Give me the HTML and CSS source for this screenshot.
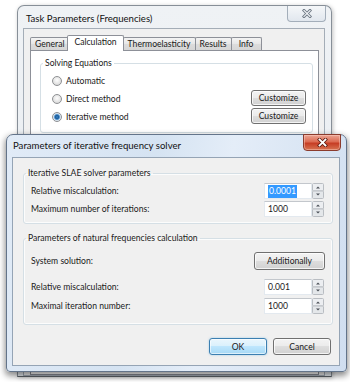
FILE: index.html
```html
<!DOCTYPE html>
<html>
<head>
<meta charset="utf-8">
<title>Task Parameters</title>
<link rel="stylesheet" href="styles.css">
</head>
<body>
<div class="desk">
  <div class="win back">
    <div class="titlebar">
      <span class="title">Task Parameters (Frequencies)</span>
      <span class="close">
        <svg width="10" height="9" viewBox="0 0 10 9"><path d="M2 1.5 L8 7.5 M8 1.5 L2 7.5" stroke="#6c7682" stroke-width="3" stroke-linecap="square"/><path d="M2 1.5 L8 7.5 M8 1.5 L2 7.5" stroke="#eef1f4" stroke-width="1.2" stroke-linecap="square"/></svg>
      </span>
    </div>
    <div class="client back-client">
      <div class="tabs">
        <div class="tab">General</div>
        <div class="tab sel">Calculation</div>
        <div class="tab">Thermoelasticity</div>
        <div class="tab">Results</div>
        <div class="tab">Info</div>
      </div>
      <div class="panel">
        <fieldset class="group solve">
          <legend>Solving Equations</legend>
          <div class="row">
            <span class="opt"><span class="radio"></span>Automatic</span>
          </div>
          <div class="row">
            <span class="opt"><span class="radio"></span>Direct method</span>
            <button class="btn customize">Customize</button>
          </div>
          <div class="row">
            <span class="opt"><span class="radio on"></span>Iterative method</span>
            <button class="btn customize">Customize</button>
          </div>
        </fieldset>
      </div>
    </div>
  </div>

  <div class="win front">
    <div class="titlebar">
      <span class="title">Parameters of iterative frequency solver</span>
      <span class="close">
        <svg width="11" height="9" viewBox="0 0 11 9"><path d="M2.5 1.5 L8.5 7.5 M8.5 1.5 L2.5 7.5" stroke="#5a1a10" stroke-width="3.4" stroke-linecap="square"/><path d="M2.5 1.5 L8.5 7.5 M8.5 1.5 L2.5 7.5" stroke="#ffffff" stroke-width="1.8" stroke-linecap="square"/></svg>
      </span>
    </div>
    <div class="client front-client">
      <fieldset class="group g1">
        <legend>Iterative SLAE solver parameters</legend>
        <div class="row">
          <span>Relative miscalculation:</span>
          <span class="spinbox"><span class="edit"><span class="selected">0.0001</span></span><svg class="spin" width="12" height="16" viewBox="0 0 12 16"><rect x="0.5" y="0.5" width="11" height="7.5" rx="1" fill="#eceef1" stroke="#b9bdc2"/><rect x="0.5" y="8" width="11" height="7.5" rx="1" fill="#e4e7ea" stroke="#b9bdc2"/><path d="M4 5.5 L6 3.5 L8 5.5Z" fill="#4a4f56"/><path d="M4 10.5 L6 12.5 L8 10.5Z" fill="#4a4f56"/></svg></span>
        </div>
        <div class="row">
          <span>Maximum number of iterations:</span>
          <span class="spinbox"><span class="edit">1000</span><svg class="spin" width="12" height="16" viewBox="0 0 12 16"><rect x="0.5" y="0.5" width="11" height="7.5" rx="1" fill="#eceef1" stroke="#b9bdc2"/><rect x="0.5" y="8" width="11" height="7.5" rx="1" fill="#e4e7ea" stroke="#b9bdc2"/><path d="M4 5.5 L6 3.5 L8 5.5Z" fill="#4a4f56"/><path d="M4 10.5 L6 12.5 L8 10.5Z" fill="#4a4f56"/></svg></span>
        </div>
      </fieldset>
      <fieldset class="group g2">
        <legend>Parameters of natural frequencies calculation</legend>
        <div class="row tall">
          <span>System solution:</span>
          <button class="btn additionally">Additionally</button>
        </div>
        <div class="row wide first">
          <span>Relative miscalculation:</span>
          <span class="spinbox"><span class="edit">0.001</span><svg class="spin" width="12" height="16" viewBox="0 0 12 16"><rect x="0.5" y="0.5" width="11" height="7.5" rx="1" fill="#eceef1" stroke="#b9bdc2"/><rect x="0.5" y="8" width="11" height="7.5" rx="1" fill="#e4e7ea" stroke="#b9bdc2"/><path d="M4 5.5 L6 3.5 L8 5.5Z" fill="#4a4f56"/><path d="M4 10.5 L6 12.5 L8 10.5Z" fill="#4a4f56"/></svg></span>
        </div>
        <div class="row wide">
          <span>Maximal iteration number:</span>
          <span class="spinbox"><span class="edit">1000</span><svg class="spin" width="12" height="16" viewBox="0 0 12 16"><rect x="0.5" y="0.5" width="11" height="7.5" rx="1" fill="#eceef1" stroke="#b9bdc2"/><rect x="0.5" y="8" width="11" height="7.5" rx="1" fill="#e4e7ea" stroke="#b9bdc2"/><path d="M4 5.5 L6 3.5 L8 5.5Z" fill="#4a4f56"/><path d="M4 10.5 L6 12.5 L8 10.5Z" fill="#4a4f56"/></svg></span>
        </div>
      </fieldset>
      <div class="actions">
        <button class="btn dlg default">OK</button>
        <button class="btn dlg">Cancel</button>
      </div>
    </div>
  </div>
</div>
</body>
</html>
```

FILE: styles.css
```css
* { box-sizing: border-box; }
html, body { margin: 0; padding: 0; }
body {
  width: 350px;
  height: 382px;
  overflow: hidden;
  background: #ffffff;
  font-family: Lato, "Open Sans", sans-serif;
  font-size: 8.6px;
  line-height: 12px;
  color: #1a1a1a;
}
.desk { position: relative; width: 350px; height: 382px; }

.win { position: absolute; display: flex; flex-direction: column; }
.back {
  left: 17px; top: 5px; width: 315px; height: 372px;
  border: 1px solid #878f98;
  border-bottom-color: #5b6167;
  border-radius: 7px 7px 0 0;
  padding: 0 6px 0 5px;
  background: linear-gradient(#eff2f5, #e6ebf0);
  box-shadow: 1px 1px 4px rgba(0, 0, 0, 0.25);
}
.front {
  left: 6px; top: 134px; width: 341px; height: 238px;
  border: 1px solid #63748a;
  border-radius: 7px 7px 4px 4px;
  padding: 0 6px 5px 5px;
  background: linear-gradient(100deg, #e1ebf7 0%, #d5e3f2 40%, #e4edf8 60%, #d0def0 100%);
  box-shadow: 0 3px 6px 1px rgba(0, 0, 0, 0.45);
}

.titlebar {
  flex: none;
  height: 22px;
  display: flex;
  justify-content: space-between;
  align-items: flex-start;
}
.title { font-size: 9.6px; line-height: 12px; color: #111; }
.back .title { padding: 7px 0 0 3px; }
.front .title { padding: 5px 0 0 1px; }

.close {
  display: flex;
  align-items: center;
  justify-content: center;
  margin-right: -1px;
  border-radius: 0 0 4px 4px;
}
.back .close {
  width: 39px; height: 16px;
  border: 1px solid #a3aeba;
  border-top: none;
  background: linear-gradient(#f5f7f9, #e1e7ee);
}
.front .close {
  width: 38px; height: 17px;
  margin-top: -1px;
  border: 1px solid #8b3b2d;
  background: linear-gradient(#eba493, #dc6b52 45%, #c63d24 55%, #d77452);
  box-shadow: inset 0 0 0 1px rgba(255, 210, 200, 0.45);
}

.client {
  flex: 1;
  display: flex;
  flex-direction: column;
  border: 1px solid #a4adb7;
  background: #f0f0f0;
}
.back-client { padding: 6px 5px 0 6px; }
.front-client { padding: 9px 6px 0 10px; border-color: #95a4b5; }

/* tabs */
.tabs { display: flex; align-items: flex-end; height: 15px; flex: none; }
.tab {
  height: 13px;
  min-width: 31px;
  padding: 0 4px;
  margin-right: -1px;
  border: 1px solid #8d9098;
  border-bottom: none;
  border-radius: 2px 2px 0 0;
  background: linear-gradient(#f4f4f4, #e6e6e6 50%, #dcdcdc 50%, #d6d6d6);
  line-height: 12px;
  text-align: center;
  white-space: nowrap;
}
.tab.sel {
  height: 16px;
  margin: 0 -1px -1px -1px;
  padding: 0 6px;
  background: #ffffff;
  position: relative;
  z-index: 2;
  line-height: 13px;
}
.panel {
  flex: 1;
  background: #ffffff;
  border: 1px solid #8d9098;
  padding: 6px 5px 0 9px;
}

/* group boxes */
.group {
  margin: 0;
  border: 1px solid #d5dfe5;
  border-radius: 3px;
  box-shadow: inset 0 0 0 1px rgba(255, 255, 255, 0.8);
  min-width: 0;
}
.group legend { padding: 0 2px; line-height: 12px; }
.solve { padding: 3px 6px 6px 11px; }
.solve legend { margin-left: -9px; }
.g1 { padding: 3px 8px 5px 7px; }
.g2 { padding: 5px 8px 9px 7px; margin-top: 8px; }
.g1 legend, .g2 legend { margin-left: -5px; }

.row {
  display: flex;
  align-items: center;
  justify-content: space-between;
  height: 18px;
  white-space: nowrap;
}
.row.tall { height: 23px; }
.row.wide { height: 19px; }
.row.first { margin-top: 5px; }

.opt { display: flex; align-items: center; }
.radio {
  width: 10px; height: 10px;
  margin-right: 4px;
  border-radius: 50%;
  border: 1px solid #8e9093;
  background: radial-gradient(circle at 50% 40%, #fdfdfd 0, #e9e9e9 45%, #cfcfcf 100%);
  flex: none;
}
.radio.on {
  background: radial-gradient(circle at 50% 50%, #3a7fc0 0, #1b5e9c 1.8px, #5f9bd2 2.6px, #d9e6f1 3.4px, #e6e6e6 100%);
}

/* buttons */
.btn {
  display: flex;
  align-items: center;
  justify-content: center;
  padding: 0;
  font: inherit;
  color: #1a1a1a;
  border: 1px solid #707070;
  border-radius: 3px;
  background: linear-gradient(#f3f3f3, #ebebeb 50%, #dedede 50%, #d1d1d1);
  box-shadow: inset 0 0 0 1px rgba(255, 255, 255, 0.75);
}
.customize { width: 55px; height: 16px; margin-top: -2px; }
.additionally { width: 71px; height: 18px; margin-right: -1px; }
.dlg { width: 58px; height: 17px; }
.dlg.default {
  border-color: #3c7fb1;
  background: linear-gradient(#eaf6fd, #d9f0fc 50%, #bee6fd 50%, #a7d9f5);
  box-shadow: inset 0 0 0 1px rgba(255, 255, 255, 0.6), 0 0 2px rgba(60, 160, 220, 0.5);
}
.actions {
  display: flex;
  justify-content: flex-end;
  gap: 6px;
  margin: 13px 2px 0 0;
}

/* spin boxes */
.spinbox { display: flex; height: 16px; }
.edit {
  width: 48px;
  height: 16px;
  padding: 0 0 0 3px;
  background: #ffffff;
  border: 1px solid #e3e9ef;
  border-top-color: #c3c7cc;
  line-height: 14px;
}
.selected { background: #3399ff; color: #ffffff; padding: 0 1px; display: inline-block; line-height: 13px; }
.spin { display: block; }
```
